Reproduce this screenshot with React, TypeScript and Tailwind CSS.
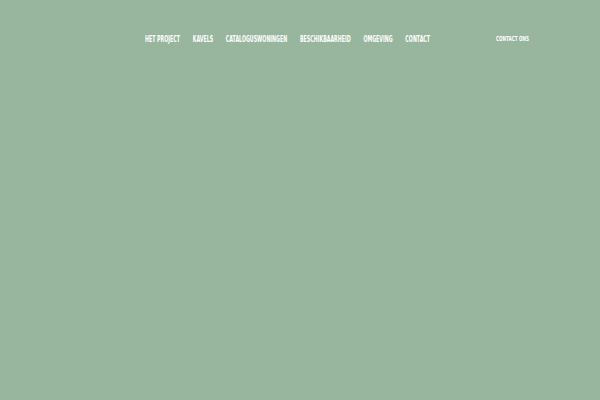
const links = ["HET PROJECT", "KAVELS", "CATALOGUSWONINGEN", "BESCHIKBAARHEID", "OMGEVING", "CONTACT"];

export default function App() {
  return (
    <div className="h-[400px] w-[600px] overflow-hidden bg-[#98b59e] font-['DejaVu_Sans_Condensed','Liberation_Sans',sans-serif] text-white">
      <header className="flex items-center pt-[32px]">
        <div className="ml-[145px] w-[285px]">
          <nav className="flex origin-left scale-x-[0.555] items-center gap-[23px] whitespace-nowrap">
            {links.map((l) => (
              <a key={l} className="text-[9.5px] font-bold leading-[14px]">
                {l}
              </a>
            ))}
          </nav>
        </div>
        <div className="ml-[66px] w-[60px]">
          <a className="block origin-left scale-x-[0.66] whitespace-nowrap text-[7px] font-bold leading-[14px]">
            CONTACT ONS
          </a>
        </div>
      </header>
    </div>
  );
}
